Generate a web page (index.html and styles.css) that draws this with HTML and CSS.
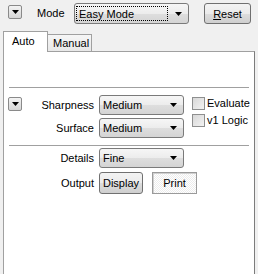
FILE: index.html
```html
<!DOCTYPE html>
<html lang="en">

<head>
    <meta charset="UTF-8">
    <title>Mode</title>
    <link rel="stylesheet" href="styles.css">
</head>

<body>
    <div class="top">
        <button class="mini-btn"><svg width="7" height="4" viewBox="0 0 7 4"><polygon points="0,0 7,0 3.5,4" fill="#000"/></svg></button>
        <span class="mode-label">Mode</span>
        <div class="combo combo-mode">
            <span class="focus">Easy Mode</span>
            <svg class="drop" width="7" height="4" viewBox="0 0 7 4"><polygon points="0,0 7,0 3.5,4" fill="#000"/></svg>
        </div>
        <button class="btn btn-reset"><u>R</u>eset</button>
    </div>

    <div class="tabs">
        <div class="tab tab-active">Auto</div>
        <div class="tab">Manual</div>
    </div>

    <div class="panel">
        <div class="sep sep-first"></div>

        <div class="settings">
            <button class="mini-btn mini-low"><svg width="7" height="4" viewBox="0 0 7 4"><polygon points="0,0 7,0 3.5,4" fill="#000"/></svg></button>
            <div class="fields">
                <span class="lbl">Sharpness</span>
                <div class="combo">
                    <span>Medium</span>
                    <svg class="drop" width="7" height="4" viewBox="0 0 7 4"><polygon points="0,0 7,0 3.5,4" fill="#000"/></svg>
                </div>
                <span class="lbl">Surface</span>
                <div class="combo">
                    <span>Medium</span>
                    <svg class="drop" width="7" height="4" viewBox="0 0 7 4"><polygon points="0,0 7,0 3.5,4" fill="#000"/></svg>
                </div>
            </div>
            <div class="checks">
                <label class="check"><span class="box"></span>Evaluate</label>
                <label class="check"><span class="box"></span>v1 Logic</label>
            </div>
        </div>

        <div class="sep sep-second"></div>

        <div class="row row-details">
            <span class="lbl">Details</span>
            <div class="combo">
                <span>Fine</span>
                <svg class="drop" width="7" height="4" viewBox="0 0 7 4"><polygon points="0,0 7,0 3.5,4" fill="#000"/></svg>
            </div>
        </div>

        <div class="row row-output">
            <span class="lbl">Output</span>
            <button class="btn btn-display">Display</button>
            <button class="btn btn-print">Print</button>
        </div>
    </div>
</body>

</html>
```
FILE: styles.css
```css
body {
    margin: 0;
    background-color: #f0f0f0;
    font-family: "Liberation Sans", Arial, sans-serif;
    font-size: 11px;
    color: #000;
    overflow: hidden;
}

button {
    font-family: inherit;
    font-size: 11px;
    color: #000;
    margin: 0;
    padding: 0;
}

.top {
    display: flex;
    align-items: flex-start;
    padding: 3px 0 0 8px;
    height: 22px;
}

.mini-btn {
    width: 14px;
    height: 14px;
    margin-top: 2px;
    border: 1px solid #8a8a8a;
    border-radius: 2px;
    background: linear-gradient(#f4f4f4, #e4e4e4 50%, #d6d6d6);
    display: flex;
    align-items: center;
    justify-content: center;
    box-sizing: border-box;
}

.mode-label {
    margin-left: 15px;
    width: 37px;
    line-height: 21px;
}

.combo {
    box-sizing: border-box;
    width: 85px;
    height: 20px;
    border: 1px solid #7a7a7a;
    border-radius: 3px;
    background: linear-gradient(#f6f6f6, #ececec 50%, #dedede 51%, #d4d4d4);
    display: flex;
    align-items: center;
    justify-content: space-between;
    padding: 0 6px 0 3px;
}

.combo-mode {
    width: 115px;
    height: 21px;
    padding-left: 1px;
}

.focus {
    width: 92px;
    height: 15px;
    line-height: 15px;
    border: 1px dotted #000;
    padding-left: 2px;
    box-sizing: border-box;
}

.drop {
    flex-shrink: 0;
}

.btn {
    box-sizing: border-box;
    height: 22px;
    border: 1px solid #707070;
    border-radius: 3px;
    background: linear-gradient(#f3f3f3, #ebebeb 50%, #dddddd 51%, #cfcfcf);
}

.btn-reset {
    width: 47px;
    height: 21px;
    margin-left: 15px;
}

.tabs {
    display: flex;
    align-items: flex-end;
    margin: 6px 0 0 3px;
    height: 20px;
}

.tab {
    box-sizing: border-box;
    width: 44px;
    height: 17px;
    border: 1px solid #a0a0a0;
    border-left: none;
    border-bottom: none;
    background: linear-gradient(#f6f6f6, #e8e8e8);
    line-height: 16px;
    padding-left: 5px;
}

.tab-active {
    width: 45px;
    height: 21px;
    margin-bottom: -1px;
    border-left: 1px solid #a0a0a0;
    background: #fff;
    padding-left: 8px;
    line-height: 18px;
    position: relative;
}

.panel {
    box-sizing: border-box;
    margin-left: 3px;
    width: 252px;
    height: 230px;
    border: 1px solid #a0a0a0;
    border-right-color: #7c7c7c;
    background: #fff;
    padding: 0 4px;
}

.sep {
    border-top: 1px solid #a0a0a0;
    margin: 0 1px;
}

.sep-first {
    margin-top: 35px;
}

.settings {
    display: flex;
    margin-top: 7px;
}

.mini-low {
    margin-top: 2px;
}

.fields {
    display: grid;
    grid-template-columns: 72px 85px;
    column-gap: 5px;
    row-gap: 3px;
    align-items: center;
}

.lbl {
    text-align: right;
}

.checks {
    display: flex;
    flex-direction: column;
    gap: 4px;
    margin: 2px 0 0 8px;
}

.check {
    display: flex;
    align-items: center;
    line-height: 13px;
}

.box {
    box-sizing: border-box;
    width: 13px;
    height: 13px;
    border: 1px solid #8e8f8f;
    background: linear-gradient(135deg, #d8d8d8, #f2f2f2);
    margin-right: 2px;
}

.sep-second {
    margin-top: 7px;
}

.row {
    display: flex;
    align-items: center;
    padding-left: 14px;
}

.row .lbl {
    width: 72px;
    margin-right: 5px;
}

.row-details {
    margin-top: 2px;
}

.row-output {
    margin-top: 4px;
}

.btn-display {
    width: 44px;
}

.btn-print {
    width: 45px;
    height: 22px;
    margin-left: 9px;
    border-radius: 0;
    border: 1px solid #9a9a9a;
    box-shadow: inset 1px 1px 0 #d0d0d0;
    background: repeating-conic-gradient(#ffffff 0 25%, #ececec 0 50%) 0 0 / 2px 2px;
}
```
